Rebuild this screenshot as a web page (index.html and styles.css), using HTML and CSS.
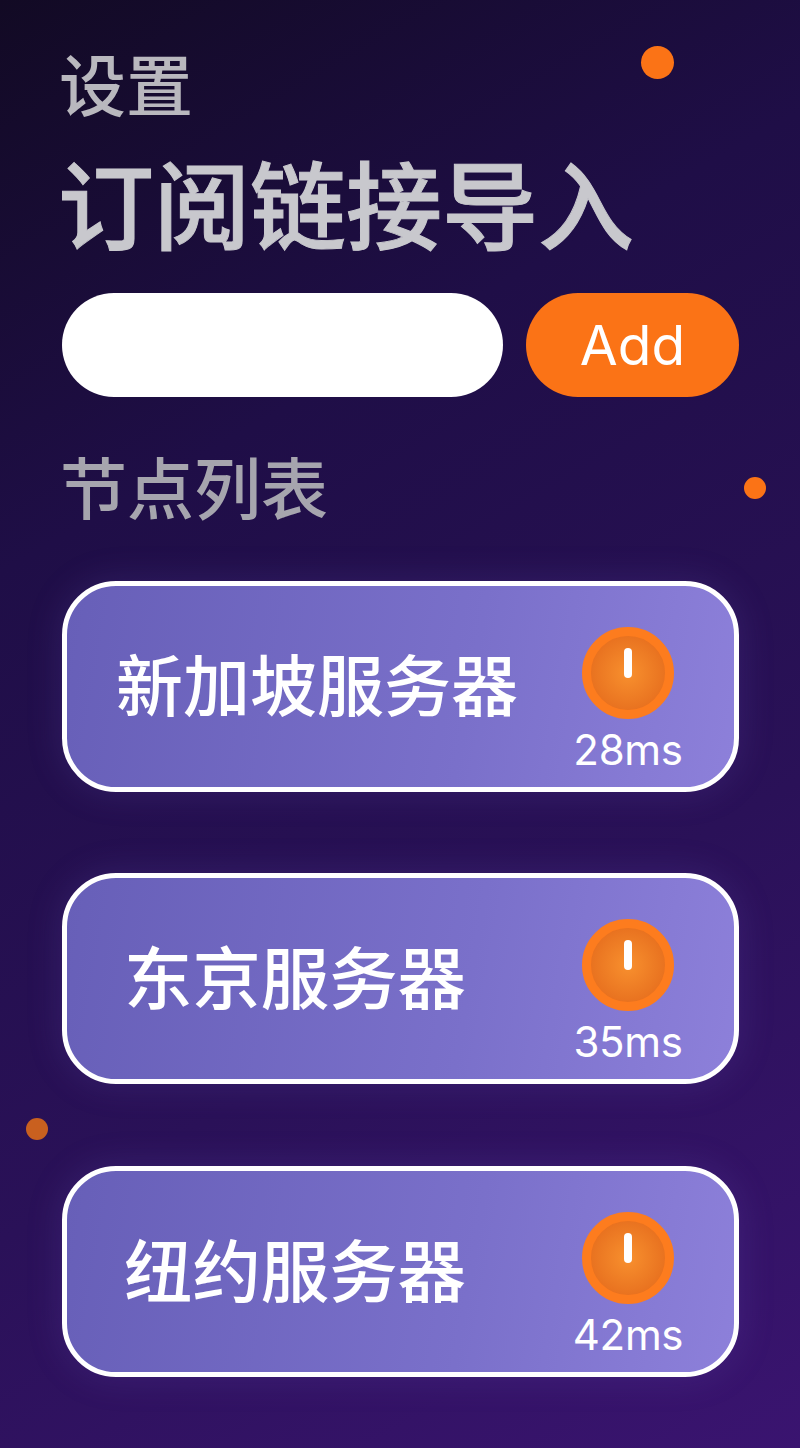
FILE: index.html
```html
<!DOCTYPE html>
<html lang="zh-CN">
<head>
    <meta charset="UTF-8">
    <meta name="viewport" content="width=device-width, initial-scale=1.0">
    <title>设置</title>
    <link rel="stylesheet" href="styles.css">
</head>
<body>

<div class="dot dot-top"></div>
<div class="dot dot-right"></div>
<div class="dot dot-left"></div>

<div class="container">
    <h2 class="page-title">设置</h2>
    <h1 class="import-title">订阅链接导入</h1>

    <div class="import-row">
        <input class="link-input" type="text">
        <button class="add-button">Add</button>
    </div>

    <h2 class="list-title">节点列表</h2>

    <div class="server-list">
        <div class="server-card">
            <span class="server-name server-name-long">新加坡服务器</span>
            <div class="server-status">
                <div class="power-button"><span class="power-mark"></span></div>
                <span class="ping">28ms</span>
            </div>
        </div>
        <div class="server-card">
            <span class="server-name">东京服务器</span>
            <div class="server-status">
                <div class="power-button"><span class="power-mark"></span></div>
                <span class="ping">35ms</span>
            </div>
        </div>
        <div class="server-card">
            <span class="server-name">纽约服务器</span>
            <div class="server-status">
                <div class="power-button"><span class="power-mark"></span></div>
                <span class="ping">42ms</span>
            </div>
        </div>
    </div>
</div>

</body>
</html>
```
FILE: styles.css
```css
html, body {
    margin: 0;
    padding: 0;
}

body {
    position: relative;
    width: 800px;
    height: 1448px;
    overflow: hidden;
    font-family: Inter, "Noto Sans CJK SC", sans-serif;
    background: linear-gradient(150deg, #120a24 0%, #1f0e47 30%, #2a1158 65%, #3a1470 100%);
}

.container {
    box-sizing: border-box;
    padding: 40px 61px 0 62px;
}

.page-title {
    margin: 0 0 0 -3px;
    font-size: 67px;
    line-height: 94px;
    font-weight: 500;
    color: #b9b8be;
}

.import-title {
    margin: 0 0 0 -4px;
    padding-top: 7px;
    font-size: 96px;
    line-height: 132px;
    font-weight: 500;
    color: #c8c8cd;
    -webkit-text-stroke: 1px #c8c8cd;
}

.import-row {
    display: flex;
    gap: 23px;
    margin-top: 20px;
}

.link-input {
    box-sizing: border-box;
    width: 441px;
    height: 104px;
    border: none;
    border-radius: 52px;
    background-color: #fff;
}

.add-button {
    width: 213px;
    height: 104px;
    padding: 0;
    border: none;
    border-radius: 52px;
    background-color: #fb7316;
    color: #fff;
    font-family: Inter, sans-serif;
    font-size: 55px;
}

.list-title {
    margin: 43px 0 0 -2px;
    font-size: 67px;
    line-height: 100px;
    font-weight: 500;
    color: #a6a5ae;
}

.server-list {
    display: flex;
    flex-direction: column;
    gap: 81.5px;
    margin-top: 40.5px;
}

.server-card {
    box-sizing: border-box;
    display: flex;
    align-items: flex-start;
    justify-content: space-between;
    height: 211px;
    padding: 0 50px 0 57px;
    border: 5px solid #fff;
    border-radius: 54px;
    background: linear-gradient(100deg, #675fb8 0%, #7a70ca 60%, #8d80da 100%);
    box-shadow: 0 0 36px rgba(120, 100, 210, 0.18);
}

.server-name {
    margin-top: 53px;
    font-size: 68.4px;
    line-height: 96px;
    font-weight: 500;
    color: #fff;
}

.server-name-long {
    margin-left: -8px;
    font-size: 67px;
}

.server-status {
    display: flex;
    flex-direction: column;
    align-items: center;
    width: 112px;
    margin-top: 41px;
}

.power-button {
    box-sizing: border-box;
    display: flex;
    justify-content: center;
    width: 92px;
    height: 92px;
    padding-top: 12px;
    border: 9px solid #fd7c1e;
    border-radius: 50%;
    background: radial-gradient(circle, #f8902e 0%, #e2661a 100%);
}

.power-mark {
    width: 8px;
    height: 30px;
    border-radius: 4px;
    background-color: #fff;
}

.ping {
    margin-top: 8px;
    font-size: 42px;
    line-height: 46px;
    color: #fff;
    letter-spacing: -0.3px;
    white-space: nowrap;
}

/* decorative dots */
.dot {
    position: absolute;
    border-radius: 50%;
    background-color: #fb7316;
}

.dot-top {
    left: 641px;
    top: 46px;
    width: 33px;
    height: 33px;
}

.dot-right {
    left: 744px;
    top: 477px;
    width: 22px;
    height: 22px;
}

.dot-left {
    left: 26px;
    top: 1118px;
    width: 22px;
    height: 22px;
    background-color: #c9601f;
}
```
